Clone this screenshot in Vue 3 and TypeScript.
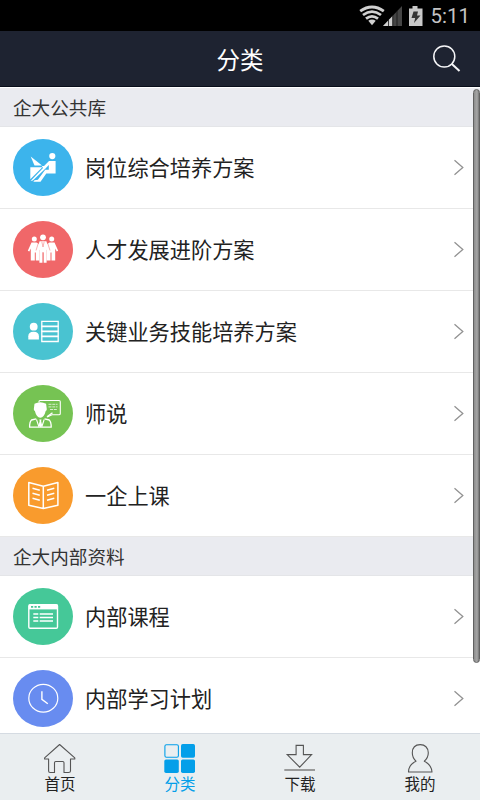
<script setup lang="ts">
interface Entry {
  label: string
  icon: string
  color: string
}

interface Section {
  title: string
  entries: Entry[]
}

const sections: Section[] = [
  {
    title: '企大公共库',
    entries: [
      { label: '岗位综合培养方案', icon: 'desk', color: '#3cb4ec' },
      { label: '人才发展进阶方案', icon: 'team', color: '#f06769' },
      { label: '关键业务技能培养方案', icon: 'skill', color: '#49c3d1' },
      { label: '师说', icon: 'teacher', color: '#76c353' },
      { label: '一企上课', icon: 'book', color: '#f99b2d' },
    ],
  },
  {
    title: '企大内部资料',
    entries: [
      { label: '内部课程', icon: 'course', color: '#45c898' },
      { label: '内部学习计划', icon: 'clock', color: '#688cf0' },
    ],
  },
]

const tabs = [
  { label: '首页', icon: 'home' },
  { label: '分类', icon: 'grid' },
  { label: '下载', icon: 'download' },
  { label: '我的', icon: 'user' },
]
const activeTab = 'grid'
</script>

<template>
  <div class="screen">
    <div class="status">
      <svg class="status-icons" width="66" height="22" viewBox="0 0 66 22">
        <g fill="none" stroke="#d0d0d0" stroke-width="2.8">
          <path d="M1.2 6.2Q13 -2.2 24.8 6.2" />
          <path d="M4 10Q13 3.2 22 10" />
          <path d="M7 13.7Q13 9 19 13.7" />
        </g>
        <path d="M9.3 15.8Q13 13.3 16.7 15.8L13 20.2z" fill="#d0d0d0" />
        <path d="M43 1V21H24z" fill="#454545" />
        <path d="M33.5 11V21H24z" fill="#d0d0d0" />
        <path d="M29.5 15v6M33.8 10v11M38 6v15" stroke="#151515" stroke-width="0.8" />
        <path d="M50 3.5h3.5V1h5v2.5H63.5V21H50z" fill="#c9c9c9" />
        <path d="M54.5 6.500h4.500l-1 4h3.500l-6.500 7.500 1.200-5h-3.700z" fill="#333" />
      </svg>
      <span class="time">5:11</span>
    </div>

    <header class="header">
      <h1 class="title">分类</h1>
      <svg class="search" width="30" height="30" viewBox="0 0 30 30" fill="none" stroke="#f6f6f8">
        <circle cx="12.3" cy="12.5" r="10.5" stroke-width="1.5" />
        <path d="M19.6 19.8L27.5 27" stroke-width="2" />
      </svg>
    </header>

    <main class="content">
      <section v-for="section in sections" :key="section.title">
        <h2 class="section-title">{{ section.title }}</h2>
        <ul class="list">
          <li v-for="entry in section.entries" :key="entry.label" class="row">
            <svg class="badge" width="60" height="57" viewBox="0 0 60 57">
              <ellipse cx="30" cy="28.5" rx="30" ry="28.5" :fill="entry.color" />
              <g v-if="entry.icon === 'desk'" fill="#fff">
                <circle cx="39.3" cy="17.1" r="3.1" />
                <path d="M17.700 17.400L29 26.600H21.500z" />
                <path d="M17.300 28.300H29.300L17.300 40.300z" />
                <path d="M36 22H42.600V34.500H33.300L27.500 42.800H20.300L21.500 41.200L24.900 40.800L32.200 30.800H35.800V26L32.500 29.400L19.800 41.400L17.600 42L30 29L28.800 27H31Z" />
              </g>
              <g v-else-if="entry.icon === 'team'" fill="#fff">
                <circle cx="21.3" cy="18.1" r="2.5" />
                <circle cx="38.7" cy="18.1" r="2.5" />
                <circle cx="30" cy="16.3" r="2.9" />
                <path d="M18.500 21.500h5l3 2v16H22.800V31.500h-1V39.500H17.800V27.500L16.300 30.500L14.800 29.700z" />
                <path d="M36.500 21.500h5L45.200 29.700L43.700 30.500L42.200 27.500V39.500H38.500V31.500h-1V39.500H33.500V23.500z" />
                <path d="M26.600 20.300h6.800L36.600 30L34.700 30.800L33.600 28.500V41.800H30.600V31.500h-1V41.800H26.400V28.500L25.300 30.800L23.400 30z" />
                <path d="M25.200 22.500L23 29.500M34.800 22.500L37 29.500M28.800 20.700L30 26L31.200 20.700M30 31v11" fill="none" :stroke="entry.color" stroke-width="0.5" />
              </g>
              <g v-else-if="entry.icon === 'skill'">
                <circle cx="20.7" cy="23.7" r="3.9" fill="#fff" />
                <path d="M15.300 36.600v-3.300q0-4.500 5.300-4.500t5.300 4.500v3.300z" fill="#fff" />
                <g fill="none" stroke="#fff" stroke-width="1.3">
                  <path d="M28.800 18.300H45.200V38.500H28.800z" />
                  <path d="M28.500 23.400H45.500M28.500 28.400H45.500M28.500 33.400H45.500" stroke-width="1.7" />
                </g>
              </g>
              <g v-else-if="entry.icon === 'teacher'">
                <g fill="none" stroke="#fff" stroke-width="1.1" stroke-linejoin="round">
                  <path d="M26 17.500V16.500q0-1 1-1H46q1.300 0 1.300 1.300V28.500q0 1.300-1.300 1.300H39L34.200 32" />
                  <path d="M34 31.800L39.500 27.800" stroke-width="1.4" />
                  <path d="M35.500 19.300H44.500M35.500 21.900H44.500M37 24.500H44.500" stroke="#d8efcf" stroke-width="1" stroke-dasharray="3 0.8" />
                  <path d="M23.300 33.800L18.500 35Q16.600 36.600 16.600 42.200H38.200Q38.200 36.600 36.200 35L31.500 33.800" stroke-width="1.3" />
                  <path d="M23.500 34.500L26 42M31.200 34.500L28.700 42" />
                </g>
                <path d="M21.500 18.800q5.800-3.300 11.600 0l.7 5.500q-.2 1.400-1.100 1.700-1.500 6.400-5.400 6.700-3.900-.3-5.400-6.700-.9-.3-1.100-1.700z" fill="#fff" />
                <path d="M26.300 34.500h2.200l-.4 1.400 1.100 4.500-1.800 1.800-1.800-1.800 1.100-4.500z" fill="#fff" />
              </g>
              <g v-else-if="entry.icon === 'book'" fill="none" stroke="#fff" stroke-width="1.5" stroke-linejoin="round">
                <path d="M30.300 19.300L15.800 15.500V38.300L30.300 41.500L44.900 38.300V15.500zV41.500" />
                <path d="M19.500 21.300L26.800 23.200M19.500 26.300L26.800 28.200M19.500 31.300L26.800 33.200M34 23.200L41.300 21.300M34 28.200L41.300 26.300M34 33.200L41.300 31.300" />
              </g>
              <g v-else-if="entry.icon === 'course'" fill="none" stroke="#fff" stroke-width="1.4">
                <rect x="15.8" y="16.700" width="28.7" height="23.600" rx="1.3" />
                <path d="M16 19H44.500" stroke-width="4.8" />
                <path d="M18 18.900h10" :stroke="entry.color" stroke-width="1.8" stroke-dasharray="2.2 1.3" />
                <path d="M20.300 26H25.300M26.700 26H40M20.300 29.400H25.300M26.700 29.400H40M20.300 33H25.300M26.700 33H40" stroke-width="1.5" />
              </g>
              <g v-else fill="none" stroke="#fff">
                <ellipse cx="30.3" cy="28.2" rx="14.5" ry="13.9" stroke-width="1.2" />
                <path d="M28.900 21.200V29.300L34.800 33.700" stroke-width="1.4" />
              </g>
            </svg>
            <span class="label">{{ entry.label }}</span>
            <svg class="chevron" width="12" height="18" viewBox="0 0 12 18">
              <path d="M1.500 1.300L9.800 8.500L1.500 15.700" fill="none" stroke="#929292" stroke-width="1.3" />
            </svg>
          </li>
        </ul>
      </section>
      <div class="scrollbar"></div>
    </main>

    <nav class="tabs">
      <a v-for="tab in tabs" :key="tab.icon" class="tab" :class="{ active: tab.icon === activeTab }">
        <svg width="34" height="32" viewBox="0 0 34 32" fill="none" stroke="#555" stroke-width="1.1" stroke-linejoin="round">
          <path
            v-if="tab.icon === 'home'"
            d="M16.600 1.500L1.600 14.900V16H5.600V28Q5.600 29.500 7.100 29.500H11.500V19.700Q11.500 18.500 12.800 18.500H19.700Q21 18.500 21 19.700V29.500H25.500Q27.500 29.500 27.500 28V16H31.800V14.900z"
          />
          <template v-else-if="tab.icon === 'grid'">
            <rect x="1.9" y="1.7" width="13.5" height="12.6" rx="1.5" stroke="#049fe9" />
            <g fill="#049fe9" stroke="none">
              <rect x="18" y="1.1" width="14" height="13.6" rx="1.7" />
              <rect x="1.3" y="16.4" width="14.5" height="13.6" rx="1.7" />
              <rect x="18" y="16.4" width="14" height="13.6" rx="1.7" />
            </g>
          </template>
          <template v-else-if="tab.icon === 'download'">
            <path d="M13.100 2.400H20.400V11.600H28.600L16.700 24.200L4.200 11.600H13.100z" stroke-linejoin="miter" />
            <path d="M1.300 27H32" stroke="#858585" stroke-width="1.6" />
          </template>
          <path
            v-else
            d="M13 18.200Q5.500 21.700 5.500 29H29Q28.500 21.700 21.300 18.200Q25.300 14.700 25.300 9.700Q24.700 1.600 17.200 1.600Q9.500 1.600 9.300 9.700Q9.300 14.700 13 18.200z"
          />
        </svg>
        <span>{{ tab.label }}</span>
      </a>
    </nav>
  </div>
</template>

<style>
body {
  margin: 0;
  overflow: hidden;
}
</style>

<style scoped>
.screen {
  display: flex;
  flex-direction: column;
  width: 480px;
  height: 800px;
  overflow: hidden;
  background: #fff;
  color: #222;
  font-family: "Noto Sans CJK SC", sans-serif;
}

.status {
  box-sizing: border-box;
  display: flex;
  flex: 0 0 31px;
  justify-content: flex-end;
  align-items: center;
  gap: 5px;
  padding: 1px 10px 0 0;
  background: #000;
}

.status-icons {
  margin-bottom: 1px;
}

.time {
  color: #c4c4c4;
  font: 20.5px/30px Roboto, sans-serif;
}

.header {
  box-sizing: border-box;
  display: grid;
  grid-template-columns: 1fr auto 1fr;
  align-items: center;
  flex: 0 0 56px;
  padding-right: 18px;
  padding-left: 18px;
  background: #1e2331;
  border-bottom: 1px solid #090e1b;
}

.title {
  grid-column: 2;
  margin: 0;
  color: #fff;
  font-size: 23.5px;
  font-weight: 400;
  line-height: 34px;
}

.search {
  justify-self: end;
}

.content {
  position: relative;
  flex: 1 1 0;
  min-height: 0;
  overflow: hidden;
  padding-top: 1px;
}

.section-title {
  box-sizing: border-box;
  height: 39px;
  margin: 0;
  padding-left: 13px;
  background: #eaebf0;
  border-bottom: 1px solid #e4e5e8;
  color: #333;
  font-size: 18.6px;
  font-weight: 400;
  line-height: 37px;
}

.list {
  margin: 0;
  padding: 0;
  list-style: none;
}

.row {
  box-sizing: border-box;
  display: flex;
  align-items: center;
  height: 82px;
  padding: 0 15px 0 13px;
  border-bottom: 1px solid #e8e8e8;
}

.badge {
  flex: none;
}

.label {
  flex: 1;
  margin-left: 12px;
  padding-bottom: 2px;
  font-size: 21.2px;
  line-height: 32px;
}

.scrollbar {
  position: absolute;
  top: 2px;
  right: 0;
  box-sizing: border-box;
  width: 7px;
  height: 574px;
  border: 1px solid #626262;
  border-radius: 4px;
  background: linear-gradient(90deg, #8d8d8d, #a7a7a7 60%, #747474);
}

.tabs {
  box-sizing: border-box;
  display: grid;
  grid-template-columns: repeat(4, 1fr);
  flex: 0 0 67px;
  background: #eaeef0;
  border-top: 1px solid #d5dbe2;
}

.tab {
  display: flex;
  flex-direction: column;
  align-items: center;
  padding-top: 9px;
  color: #222;
  font-size: 15.5px;
  line-height: 16px;
}

.tab.active {
  color: #049fe9;
}
</style>
